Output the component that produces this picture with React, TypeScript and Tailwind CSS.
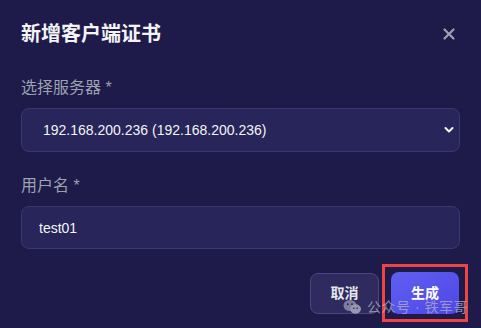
import React from "react";

const font = { fontFamily: '"Liberation Sans", "Noto Sans CJK SC", sans-serif' };

export default function App() {
  return (
    <div
      className="relative w-[481px] h-[328px] bg-[#1e1b4b] overflow-hidden px-[21px] pt-[20px]"
      style={font}
    >
      <div className="flex items-center justify-between h-[28px]">
        <h2 className="text-[20px] leading-[28px] font-bold text-[#f3f4f6]">新增客户端证书</h2>
        <button className="mr-[4px] text-[#9ca3af]">
          <svg width="14" height="14" viewBox="0 0 14 14" fill="none">
            <path d="M2.5 2.5l9 9M11.5 2.5l-9 9" stroke="currentColor" strokeWidth="2.2" strokeLinecap="round" />
          </svg>
        </button>
      </div>

      <div className="mt-[28px] text-[16px] leading-[24px] text-[#9ca3af]">选择服务器 *</div>
      <div className="relative mt-[8px]">
        <select className="appearance-none w-full h-[44px] rounded-[8px] bg-[#28255a] border border-[#3b3870] pl-[21px] text-[14px] text-[#f3f4f6] outline-none">
          <option>192.168.200.236 (192.168.200.236)</option>
        </select>
        <svg
          className="absolute right-[6px] top-[18px] pointer-events-none"
          width="10"
          height="8"
          viewBox="0 0 10 8"
          fill="none"
        >
          <path d="M1.5 2l3.5 3.5L8.5 2" stroke="#f3f4f6" strokeWidth="2" strokeLinecap="round" strokeLinejoin="round" />
        </svg>
      </div>

      <div className="mt-[22px] text-[16px] leading-[24px] text-[#9ca3af]">用户名 *</div>
      <input
        className="mt-[8px] w-full h-[43px] rounded-[8px] bg-[#28255a] border border-[#3b3870] px-[17px] text-[14px] text-[#f3f4f6] outline-none"
        defaultValue="test01"
      />

      <div className="mt-[23px] flex justify-end items-center gap-[12px] pr-[1px]">
        <button className="w-[69px] h-[41px] rounded-[8px] bg-[#2f2b5e] border border-[#4a4680] text-[14px] font-bold text-[#e5e7eb]">
          取消
        </button>
        <div className="relative">
          <button className="w-[68px] h-[42px] rounded-[8px] bg-gradient-to-br from-[#5f5ff2] to-[#4f46e5] text-[14px] font-bold text-white">
            生成
          </button>
          <div className="absolute left-[-9px] top-[-8px] w-[86px] h-[58px] border-[3px] border-[#ef4444] pointer-events-none" />
        </div>
      </div>

      <div className="absolute left-[343px] top-[299px] flex items-center gap-[5px] pointer-events-none opacity-70 whitespace-nowrap">
        <svg width="19" height="16" viewBox="0 0 19 16">
          <ellipse cx="7" cy="6.5" rx="6.5" ry="5.5" fill="#a1a1b5" />
          <ellipse cx="12.5" cy="10" rx="5.5" ry="4.7" fill="#c5c5d2" />
          <circle cx="4.8" cy="5.2" r="0.9" fill="#1e1b4b" />
          <circle cx="9" cy="5.2" r="0.9" fill="#1e1b4b" />
          <circle cx="10.8" cy="9.3" r="0.8" fill="#1e1b4b" />
          <circle cx="14.2" cy="9.3" r="0.8" fill="#1e1b4b" />
        </svg>
        <span className="text-[14px] leading-[16px] text-[#b7b7c6] tracking-[0.5px]">公众号 · 铁军哥</span>
      </div>
    </div>
  );
}
